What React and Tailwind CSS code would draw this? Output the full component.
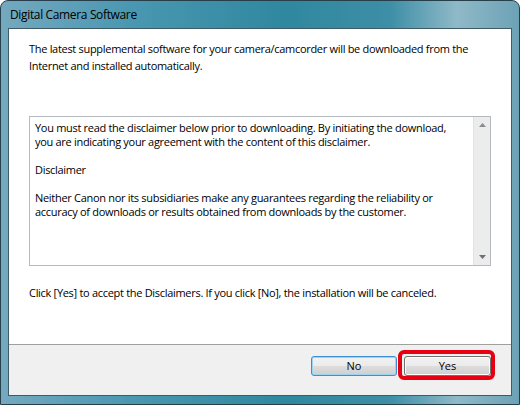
import React from "react";

export default function App() {
  const font = { fontFamily: '"Open Sans", "Noto Sans", "Liberation Sans", sans-serif' };
  return (
    <div className="w-[520px] h-[405px] bg-white">
      <div
        className="relative w-[520px] h-[405px] rounded-t-[8px] border border-[#263f4a] flex flex-col px-[7px] pb-[8px] bg-[linear-gradient(90deg,#74a9bf_0%,#4a97b1_25%,#2f889f_55%,#3d8ea6_75%,#8fb9c7_88%,#6ca2b6_100%)]"
        style={font}
      >
        <div className="h-[27px] flex items-center pl-[2px] text-[12px] text-black shrink-0 tracking-[-0.35px]">
          Digital Camera Software
        </div>
        <div className="flex-1 flex flex-col border border-[#3f5b66] bg-white min-h-0">
          <div className="h-[315px] flex flex-col px-[20px] pt-[13px] text-[11px] leading-[14px] text-black tracking-[-0.3px] whitespace-nowrap">
            <p>
              The latest supplemental software for your camera/camcorder will be downloaded from the
            </p>
            <p className="mt-[3px]">Internet and installed automatically.</p>
            <div className="mt-[43px] h-[150px] border border-[#b5b9c0] flex">
              <div className="flex-1 pl-[5px] pt-[4px]">
                <p>
                  You must read the disclaimer below prior to downloading. By initiating the download,
                  <br />
                  you are indicating your agreement with the content of this disclaimer.
                </p>
                <p className="mt-[14px]">Disclaimer</p>
                <p className="mt-[14px]">
                  Neither Canon nor its subsidiaries make any guarantees regarding the reliability or
                  <br />
                  accuracy of downloads or results obtained from downloads by the customer.
                </p>
              </div>
              <div className="w-[17px] bg-[#ececec] border-l border-[#e2e2e2] flex flex-col justify-between items-center py-[6px]">
                <svg width="7" height="4" viewBox="0 0 7 4">
                  <path d="M3.5 0 L7 4 L0 4 Z" fill="#8c8c8c" />
                </svg>
                <svg width="7" height="4" viewBox="0 0 7 4">
                  <path d="M0 0 L7 0 L3.5 4 Z" fill="#707070" />
                </svg>
              </div>
            </div>
            <p className="mt-[20px]">
              Click [Yes] to accept the Disclaimers. If you click [No], the installation will be canceled.
            </p>
          </div>
          <div className="h-px bg-[#a0a0a0]" />
          <div className="flex-1 bg-[#f0f0f0] flex justify-end items-start pt-[11px] pr-[20px] gap-[7px]">
            <button className="block w-[86px] h-[20px] rounded-[3px] border border-[#3c8fd0] text-[11px] leading-[18px] text-black bg-[linear-gradient(#f2f2f2_0%,#ebebeb_48%,#dddddd_50%,#cfcfcf_100%)] shadow-[inset_0_0_0_1px_#9fd3f2]">
              No
            </button>
            <div className="relative">
              <button className="block w-[87px] h-[20px] rounded-[3px] border border-[#707070] text-[11px] leading-[18px] text-black bg-[linear-gradient(#f2f2f2_0%,#ebebeb_48%,#dddddd_50%,#cfcfcf_100%)] shadow-[inset_0_0_0_1px_#fcfcfc]">
                Yes
              </button>
              <div className="absolute left-[-6px] top-[-6px] w-[97px] h-[30px] rounded-[6px] border-[4px] border-[#e60012]" />
            </div>
          </div>
        </div>
      </div>
    </div>
  );
}
